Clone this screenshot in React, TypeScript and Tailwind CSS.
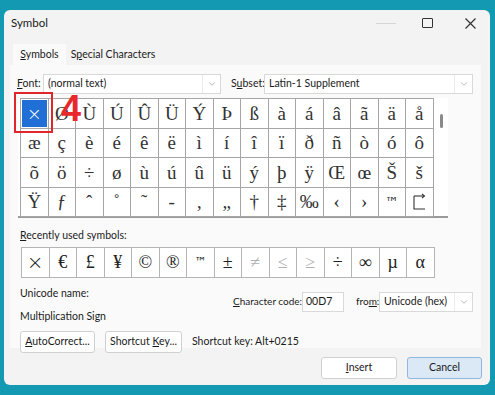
import { ChevronDown } from 'lucide-react';

const rows = [
  ['×', 'Ø', 'Ù', 'Ú', 'Û', 'Ü', 'Ý', 'Þ', 'ß', 'à', 'á', 'â', 'ã', 'ä', 'å'],
  ['æ', 'ç', 'è', 'é', 'ê', 'ë', 'ì', 'í', 'î', 'ï', 'ð', 'ñ', 'ò', 'ó', 'ô'],
  ['õ', 'ö', '÷', 'ø', 'ù', 'ú', 'û', 'ü', 'ý', 'þ', 'ÿ', 'Œ', 'œ', 'Š', 'š'],
  ['Ÿ', 'ƒ', 'ˆ', '˚', '˜', '-', '‚', '„', '†', '‡', '‰', '‹', '›', '™', ''],
];

const recent = ['×', '€', '£', '¥', '©', '®', '™', '±', '≠', '≤', '≥', '÷', '∞', 'µ', 'α'];
const faded = ['≠', '≤', '≥'];

function Select({ value, width }: { value: string; width: string }) {
  return (
    <div className={`${width} h-[20px] flex items-center bg-white border border-[#d9d9d9]`}>
      <span className="flex-1 pl-[4px] truncate">{value}</span>
      <div className="w-[18px] h-full flex items-center justify-center border-l border-[#ececec]">
        <ChevronDown size={10} strokeWidth={1.5} className="text-[#8a8a8a]" />
      </div>
    </div>
  );
}

function Button({ label, primary }: { label: React.ReactNode; primary?: boolean }) {
  return (
    <div
      className={`h-[22px] flex items-center justify-center rounded-[3px] border ${
        primary ? 'bg-[#dbe9f6] border-[#8fb8de]' : 'bg-white border-[#d0d0d0]'
      }`}
    >
      {label}
    </div>
  );
}

// odd glyph in the last grid cell
function BoxArrow() {
  return (
    <svg width="16" height="18" viewBox="0 0 16 18" fill="none" stroke="#333" strokeWidth="1.1">
      <path d="M3 3v13h11" />
      <path d="M3 3h10" />
      <path d="M11 1l2.5 2-2.5 2" />
    </svg>
  );
}

export default function App() {
  return (
    <div className="relative w-[495px] h-[395px] bg-[#1399b1] pt-[10px] pl-[4px] overflow-hidden whitespace-nowrap font-['Lato',sans-serif] text-[10.5px] text-[#1a1a1a]">
      <div className="w-[486px] h-[375px] rounded-[6px] bg-[#f3f3f3] flex flex-col">
        {/* Title bar */}
        <div className="h-[26px] flex items-center pl-[7px]">
          <span className="text-[11.5px] flex-1">Symbol</span>
          <div className="w-[20px] h-px bg-[#d6d6d6] mr-[26px]" />
          <div className="w-[11px] h-[10px] border-[1.3px] border-[#333] rounded-[1px] mr-[32px]" />
          <svg width="11" height="11" viewBox="0 0 11 11" stroke="#333" strokeWidth="1.2" className="mr-[14px]">
            <path d="M0.5 0.5l10 10M10.5 0.5l-10 10" />
          </svg>
        </div>

        {/* Tabs */}
        <div className="mt-[8px] flex pl-[9px] h-[21px] items-end">
          <div className="w-[53px] h-[21px] bg-[#fafafa] flex items-center justify-center">
            <span>
              <u>S</u>ymbols
            </span>
          </div>
          <div className="w-[94px] h-[21px] flex items-center justify-center">
            <span>
              S<u>p</u>ecial Characters
            </span>
          </div>
        </div>

        {/* Panel */}
        <div className="ml-[6px] w-[471px] h-[283px] bg-[#fafafa] flex flex-col">
          <div className="mt-[9px] flex items-center">
            <span className="ml-[7px] w-[26px]">
              <u>F</u>ont:
            </span>
            <Select value="(normal text)" width="w-[178px]" />
            <span className="ml-[10px] w-[33px]">
              S<u>u</u>bset:
            </span>
            <Select value="Latin-1 Supplement" width="w-[209px]" />
          </div>

          {/* Symbol grid */}
          <div className="mt-[4px] ml-[8px] w-[430px] h-[120px] bg-white flex border-b-2 border-[#9a9a9a]">
            <div className="ml-[2px] grid grid-cols-[repeat(15,27.5px)] border-l border-t border-[#a6a6a6] h-fit">
              {rows.map((row, ri) =>
                row.map((ch, ci) => {
                  const selected = ri === 0 && ci === 0;
                  return (
                    <div
                      key={`${ri}-${ci}`}
                      className="h-[29.5px] border-r border-b border-[#a6a6a6] flex items-center justify-center p-px"
                    >
                      {selected ? (
                        <div className="w-full h-full bg-[#1f6fd6] flex items-center justify-center text-white text-[18px] font-['DejaVu_Sans',sans-serif] font-light">
                          ×
                        </div>
                      ) : ch === '' ? (
                        <BoxArrow />
                      ) : (
                        <span
                          className={
                            ch === '™'
                              ? "text-[14px] font-['DejaVu_Sans',sans-serif] text-[#333] leading-none"
                              : "text-[19px] font-['Liberation_Serif',serif] leading-none text-[#333]"
                          }
                        >
                          {ch}
                        </span>
                      )}
                    </div>
                  );
                })
              )}
            </div>
            <div className="flex-1 relative">
              <div className="absolute left-[6px] top-[16px] w-[3px] h-[14px] bg-[#8a8a8a] rounded-full" />
            </div>
          </div>

          <div className="mt-[10px] ml-[10px]">
            <u>R</u>ecently used symbols:
          </div>

          <div className="mt-[3px] ml-[11px] flex w-fit border-l border-t border-[#b5b5b5]">
            {recent.map((ch, i) => (
              <div
                key={i}
                className={`w-[27.5px] h-[30px] bg-white border-r border-b border-[#b5b5b5] flex items-center justify-center ${
                  faded.includes(ch) ? 'text-[#b0b0b0]' : 'text-[#222]'
                } ${
                  i === 0
                    ? "text-[20px] font-['DejaVu_Sans',sans-serif] font-light"
                    : ch === '™'
                    ? "text-[12px] font-['DejaVu_Sans',sans-serif]"
                    : "text-[18px] font-['Liberation_Serif',serif]"
                }`}
              >
                {ch}
              </div>
            ))}
          </div>

          <div className="mt-[8px] ml-[10px] flex">
            <div className="w-[200px] flex flex-col gap-[7px]">
              <span>Unicode name:</span>
              <span>Multiplication Sign</span>
            </div>
            <div className="flex items-center ml-[13px] mt-[6px] h-[20px]">
              <span className="w-[69px] text-[10px]">
                <u>C</u>haracter code:
              </span>
              <div className="w-[42px] h-[20px] bg-white border border-[#d9d9d9] pl-[3px] flex items-center">
                00D7
              </div>
              <span className="ml-[12px] w-[23px] text-[10px]">
                fro<u>m</u>:
              </span>
              <Select value="Unicode (hex)" width="w-[94px]" />
            </div>
          </div>

          <div className="mt-[7px] ml-[10px] flex items-center">
            <div className="w-[75px]">
              <Button
                label={
                  <span>
                    <u>A</u>utoCorrect...
                  </span>
                }
              />
            </div>
            <div className="w-[77px] ml-[10px]">
              <Button
                label={
                  <span>
                    Shortcut <u>K</u>ey...
                  </span>
                }
              />
            </div>
            <span className="ml-[10px]">Shortcut key: Alt+0215</span>
          </div>
        </div>

        {/* Footer buttons */}
        <div className="mt-[9px] flex justify-end pr-[8px] gap-[10px]">
          <div className="w-[76px]">
            <Button
              label={
                <span>
                  <u>I</u>nsert
                </span>
              }
            />
          </div>
          <div className="w-[75px]">
            <Button label="Cancel" primary />
          </div>
        </div>
      </div>

      {/* Red annotation */}
      <div className="absolute left-[14px] top-[92px] w-[39px] h-[41px] border-2 border-[#e0252b]" />
      <div className="absolute left-[61px] top-[91px] text-[36px] font-bold leading-none text-[#e8282b] font-['Liberation_Sans',sans-serif]">
        4
      </div>
    </div>
  );
}
